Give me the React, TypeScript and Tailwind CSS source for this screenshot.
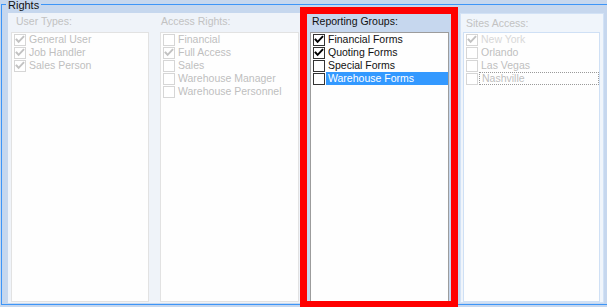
import React from "react";

type Item = { label: string; checked?: boolean; selected?: boolean; focus?: boolean; faint?: boolean };

function Box({ checked, disabled }: { checked?: boolean; disabled?: boolean }) {
  const border = disabled ? "#d6d6d6" : "#333333";
  const mark = disabled ? "#c2c2c2" : "#000000";
  return (
    <svg width="12" height="12" viewBox="0 0 12 12" className="block shrink-0">
      <rect x="0.5" y="0.5" width="11" height="11" fill="#ffffff" stroke={border} />
      {checked && (
        <polyline points="2.5,5.5 4.6,7.8 9.4,2.8" fill="none" stroke={mark} strokeWidth="1.9" strokeLinecap="square" />
      )}
    </svg>
  );
}

function Row({ item, disabled }: { item: Item; disabled?: boolean }) {
  let textCls = "text-[#111111] pl-[2px]";
  if (disabled) textCls = item.faint ? "text-[#d8d8d8] pl-[2px]" : "text-[#bfbfbf] pl-[2px]";
  if (item.selected) textCls = "bg-[#3399ff] text-white pl-[2px] flex-1";
  if (item.focus) textCls += " flex-1 border border-dotted border-[#9a9a9a] leading-[11px] pl-[1px]";
  return (
    <div className="flex h-[13px] items-center">
      <div className="ml-[2px] mr-[1px]">
        <Box checked={item.checked} disabled={disabled} />
      </div>
      <span className={"h-[13px] whitespace-nowrap " + textCls}>{item.label}</span>
    </div>
  );
}

function List({ items, disabled, width, border }: { items: Item[]; disabled?: boolean; width: string; border: string }) {
  return (
    <div className={"mt-[4px] h-[270px] border bg-[#fefefe] " + width + " " + border}>
      {items.map((it) => (
        <Row key={it.label} item={it} disabled={disabled} />
      ))}
    </div>
  );
}

export default function App() {
  return (
    <div className="relative h-[307px] w-[607px] overflow-hidden bg-[#c6d7ee] pl-[1px] pt-[4px] font-['Liberation_Sans',Arial,sans-serif] text-[10.5px] leading-[13px]">
      <div className="relative h-[301px] w-[700px] border-b border-l border-t border-[#3d95f7] pl-[6px] pt-[8px]">
        <span className="absolute left-[4px] top-[-6px] bg-[#c6d7ee] px-[2px] text-[11px] text-[#111111]">Rights</span>
        <div className="flex h-[290px]">
          {/* Columns 1-2 */}
          <div className="flex h-[290px] w-[292px] bg-[#eff3f9]">
            <div className="w-[150px] pl-[3px] pt-[2px]">
              <div className="h-[13px] pl-[5px] text-[#c2c2c2]">User Types:</div>
              <List
                width="w-[138px]"
                border="border-[#e2e2e2]"
                disabled
                items={[
                  { label: "General User", checked: true },
                  { label: "Job Handler", checked: true },
                  { label: "Sales Person", checked: true },
                ]}
              />
            </div>
            <div className="w-[142px] pl-[2px] pt-[2px]">
              <div className="h-[13px] pl-[1px] text-[#c2c2c2]">Access Rights:</div>
              <List
                width="w-[139px]"
                border="border-[#e2e2e2]"
                disabled
                items={[
                  { label: "Financial" },
                  { label: "Full Access", checked: true },
                  { label: "Sales" },
                  { label: "Warehouse Manager" },
                  { label: "Warehouse Personnel" },
                ]}
              />
            </div>
          </div>
          {/* Column 3 */}
          <div className="w-[160px] pl-[10px] pt-[2px]">
            <div className="h-[13px] pl-[2px] text-[#111111]">Reporting Groups:</div>
            <List
              width="w-[139px]"
              border="border-[#9c9c9c]"
              items={[
                { label: "Financial Forms", checked: true },
                { label: "Quoting Forms", checked: true },
                { label: "Special Forms" },
                { label: "Warehouse Forms", selected: true },
              ]}
            />
          </div>
          {/* Column 4 */}
          <div className="h-[290px] w-[144px] border border-[#d2e2f6] bg-[#f0f5fb] pl-[2px] pt-[1px]">
            <div className="h-[13px] pl-[3px] pt-[2px] text-[#c2c2c2] box-content">Sites Access:</div>
            <div className="-mt-[2px]">
              <List
                width="w-[137px]"
                border="border-[#cfe0f5]"
                disabled
                items={[
                  { label: "New York", checked: true, faint: true },
                  { label: "Orlando" },
                  { label: "Las Vegas" },
                  { label: "Nashville", focus: true },
                ]}
              />
            </div>
          </div>
        </div>
      </div>
      <div className="absolute left-[300px] top-[7px] h-[301px] w-[158px] border-[7px] border-[#ff0000]" />
    </div>
  );
}
